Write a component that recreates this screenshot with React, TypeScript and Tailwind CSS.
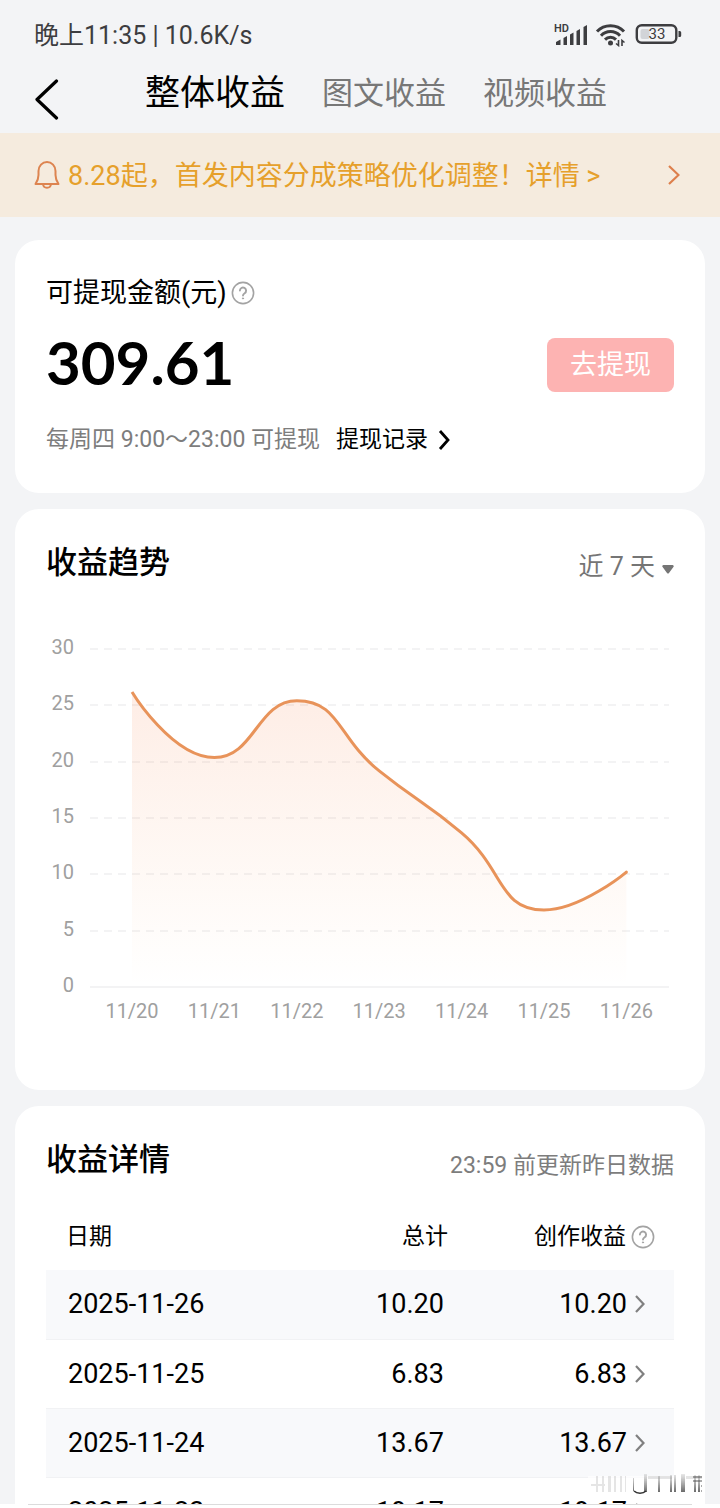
import { useId, useState } from "react";

type Tab = "all" | "article" | "video";

type Point = { x: number; y: number };

const tabs: { key: Tab; label: string }[] = [
    { key: "all", label: "整体收益" },
    { key: "article", label: "图文收益" },
    { key: "video", label: "视频收益" },
];

const trend = [
    { day: "11/20", value: 26.18 },
    { day: "11/21", value: 20.36 },
    { day: "11/22", value: 25.4 },
    { day: "11/23", value: 19.17 },
    { day: "11/24", value: 13.67 },
    { day: "11/25", value: 6.83 },
    { day: "11/26", value: 10.2 },
];

const rows = [
    { date: "2025-11-26", total: "10.20", creation: "10.20" },
    { date: "2025-11-25", total: "6.83", creation: "6.83" },
    { date: "2025-11-24", total: "13.67", creation: "13.67" },
    { date: "2025-11-23", total: "19.17", creation: "19.17" },
];

const clamp = (v: number, a: number, b: number) => Math.max(Math.min(v, Math.max(a, b)), Math.min(a, b));

// bezier line whose control points never leave the range of their neighbours
function smoothPath(points: Point[]) {
    let d = `M${points[0].x} ${points[0].y}`;
    let cp = points[0];
    for (let i = 1; i < points.length; i++) {
        const prev = points[i - 1];
        const p = points[i];
        const next = points[i + 1];
        let before = p;
        let after = p;
        if (next) {
            const lenPrev = Math.hypot(p.x - prev.x, p.y - prev.y);
            const lenNext = Math.hypot(next.x - p.x, next.y - p.y);
            const k = (0.5 * lenNext) / (lenNext + lenPrev);
            const nx = clamp(p.x + (next.x - prev.x) * k, p.x, next.x);
            const ny = clamp(p.y + (next.y - prev.y) * k, p.y, next.y);
            before = {
                x: clamp(p.x - ((nx - p.x) * lenPrev) / lenNext, prev.x, p.x),
                y: clamp(p.y - ((ny - p.y) * lenPrev) / lenNext, prev.y, p.y),
            };
            after = {
                x: p.x + ((p.x - before.x) * lenNext) / lenPrev,
                y: p.y + ((p.y - before.y) * lenNext) / lenPrev,
            };
        }
        d += `C${cp.x} ${cp.y} ${before.x} ${before.y} ${p.x} ${p.y}`;
        cp = after;
    }
    return d;
}

function StatusBar() {
    return (
        <div className="flex h-[66px] items-center justify-between pt-1 pr-[38px] pl-[34px] text-[#3d3d40]">
            <span className="pt-0.5 text-[25px] leading-8">晚上11:35 | 10.6K/s</span>
            <svg width="128" height="24" viewBox="554 23 128 24" fill="currentColor">
                <text x="554" y="32" fontSize="11" fontWeight="600">HD</text>
                <path d="M556 45v-3l4.500-2.500V45zM563.500 45v-7l3.500-2v9zM570 45V34.500l3.500-2V45zM576.500 45V31l3.500-2v16zM583.500 45V27l3.500-2v20z" />
                <g fill="none" stroke="currentColor" strokeWidth="3">
                    <path d="M597 31.500a18.500 18.500 0 0 1 27 0" />
                    <path d="M601 35.700a13 13 0 0 1 19 0" />
                    <path d="M605 39.600a7.800 7.800 0 0 1 11 0" />
                </g>
                <circle cx="610.500" cy="43" r="2.500" />
                <path d="M618.500 40v5.500l-2.500-2M622 46v-5.500l2.500 2" fill="none" stroke="currentColor" strokeWidth="1.600" />
                <rect x="636.800" y="25.200" width="39.500" height="17.600" rx="5" fill="none" stroke="currentColor" strokeWidth="2.400" />
                <rect x="640.500" y="29" width="9" height="10" rx="2" fill="#d2d4d8" />
                <path d="M678.500 31h1.200a1.500 1.500 0 0 1 1.500 1.500v3a1.500 1.500 0 0 1-1.500 1.500h-1.200z" />
                <text x="657" y="39" fontSize="15" textAnchor="middle">33</text>
            </svg>
        </div>
    );
}

function HelpIcon() {
    return (
        <svg width="24" height="24" viewBox="0 0 24 24" fill="none" stroke="#a3a3a3" strokeWidth="1.600" strokeLinecap="round">
            <circle cx="12" cy="12" r="10.600" />
            <path d="M8.900 9.600a3.100 3.100 0 1 1 4.800 2.600c-1.100.700-1.700 1.200-1.700 2.300" strokeWidth="1.900" />
            <circle cx="12" cy="17.400" r=".6" fill="#a3a3a3" strokeWidth="1" />
        </svg>
    );
}

function TrendChart() {
    const gradientId = useId();
    const yOf = (value: number) => 367 - value * 11.27;
    const points = trend.map((item, i) => ({ x: 85 + i * 82.4, y: yOf(item.value) }));
    const line = smoothPath(points);
    const last = points[points.length - 1];

    return (
        <svg className="mt-[35px] w-full" viewBox="-1 0 628 420" fontSize="20" fill="#a0a0a0">
            <defs>
                <linearGradient id={gradientId} gradientUnits="userSpaceOnUse" x1="0" y1="72" x2="0" y2="367">
                    <stop offset="0" stopColor="#f7672a" stopOpacity="0.120" />
                    <stop offset="1" stopColor="#f7862a" stopOpacity="0" />
                </linearGradient>
            </defs>
            {[30, 25, 20, 15, 10, 5, 0].map((tick) => (
                <g key={tick}>
                    <text x="27" y={yOf(tick) + 5} textAnchor="end">{tick}</text>
                    <line
                        x1="43"
                        x2="622"
                        y1={Math.round(yOf(tick))}
                        y2={Math.round(yOf(tick))}
                        stroke="#f3f3f4"
                        strokeWidth="2"
                        strokeDasharray={tick === 0 ? undefined : "8 6"}
                    />
                </g>
            ))}
            <path d={`${line}V367H${points[0].x}Z`} fill={`url(#${gradientId})`} />
            <path d={line} fill="none" stroke="#e8935a" strokeWidth="3" strokeLinejoin="round" />
            {trend.map((item, i) => (
                <text key={item.day} x={points[i].x} y="398" textAnchor="middle">{item.day}</text>
            ))}
            <circle cx={last.x} cy={last.y} r="1.500" fill="#e8935a" />
        </svg>
    );
}

function BalanceCard() {
    return (
        <section className="rounded-3xl bg-white px-[31px] pt-[33px] pb-[37px]">
            <div className="flex items-center gap-1 text-[27px] leading-10">
                <h2>可提现金额(元)</h2>
                <button type="button" aria-label="金额说明">
                    <HelpIcon />
                </button>
            </div>
            <div className="mt-[25px] flex h-[54px] items-center justify-between">
                <strong className="pb-1.5 font-[Lato,sans-serif] text-[60px] leading-[54px] font-bold">309.61</strong>
                <button type="button" className="h-full w-[127px] rounded-lg bg-[#fdb3b2] text-[27px] text-white">
                    去提现
                </button>
            </div>
            <div className="mt-8 flex items-center gap-4 text-[23px] leading-8">
                <span className="text-[#7d7d7d]">每周四 9:00～23:00 可提现</span>
                <a href="#records" className="flex items-center gap-2.5">
                    提现记录
                    <svg width="12" height="20" viewBox="0 0 12 20" fill="none" stroke="currentColor" strokeWidth="2.800">
                        <path d="M2 1l8 9-8 9" />
                    </svg>
                </a>
            </div>
        </section>
    );
}

function TrendCard() {
    return (
        <section className="rounded-3xl bg-white px-[31px] pt-8 pb-[50px]">
            <div className="flex items-center justify-between">
                <h2 className="text-[31px] leading-[44px] font-medium">收益趋势</h2>
                <div className="relative pt-2">
                    <select
                        aria-label="时间范围"
                        className="field-sizing-content appearance-none bg-transparent pr-[19px] text-[25px] leading-9 text-[#757575]"
                    >
                        <option>近 7 天</option>
                        <option>近 30 天</option>
                    </select>
                    <svg className="pointer-events-none absolute top-6 right-0" width="12" height="9" viewBox="0 0 12 9" fill="#757575">
                        <path d="M1.500 0h9a1.200 1.200 0 0 1 .9 2L7 8a1.400 1.400 0 0 1-2 0L.6 2a1.200 1.200 0 0 1 .9-2z" />
                    </svg>
                </div>
            </div>
            <TrendChart />
        </section>
    );
}

function DetailCard() {
    return (
        <section className="rounded-t-3xl bg-white px-[31px] pt-8">
            <div className="flex items-center justify-between">
                <h2 className="text-[31px] leading-[44px] font-medium">收益详情</h2>
                <span className="pt-3 text-[23px] leading-8 text-[#7d7d7d]">23:59 前更新昨日数据</span>
            </div>
            <table className="mt-[22px] w-full table-fixed">
                <thead>
                    <tr className="h-[66px] text-[23px] leading-8">
                        <th className="w-[32%] pl-5 text-left font-normal">日期</th>
                        <th className="w-[32%] text-right font-normal">总计</th>
                        <th className="pr-[19px] font-normal">
                            <div className="flex items-center justify-end gap-[5px]">
                                创作收益
                                <button type="button" aria-label="创作收益说明">
                                    <HelpIcon />
                                </button>
                            </div>
                        </th>
                    </tr>
                </thead>
                <tbody>
                    {rows.map((row) => (
                        <tr key={row.date} className="h-[69px] border-b border-[#f1f2f4] text-[27px] leading-9 odd:bg-[#f8f9fb]">
                            <td className="pl-[22px]">{row.date}</td>
                            <td className="pr-1 text-right">{row.total}</td>
                            <td className="pr-[29px]">
                                <a href={`#${row.date}`} className="flex items-center justify-end gap-2">
                                    {row.creation}
                                    <svg width="10" height="18" viewBox="0 0 10 18" fill="none" stroke="#808080" strokeWidth="2.200">
                                        <path d="M1 1l7.500 8L1 17" />
                                    </svg>
                                </a>
                            </td>
                        </tr>
                    ))}
                </tbody>
            </table>
        </section>
    );
}

// faded streaks floating in the bottom corner
function CornerMark() {
    const id = useId();
    return (
        <svg className="pointer-events-none absolute right-4 bottom-2.5" width="116" height="26" viewBox="0 0 116 26">
            <defs>
                <linearGradient id={id} x1="0" y1="0" x2="0" y2="1">
                    <stop offset="0" stopColor="#666" stopOpacity="0.150" />
                    <stop offset="1" stopColor="#444" stopOpacity="0.800" />
                </linearGradient>
                <filter id={`${id}-soft`}>
                    <feGaussianBlur stdDeviation="0.7 0.3" />
                </filter>
            </defs>
            <rect y="4" width="116" height="18" fill="#fff" opacity="0.700" />
            <g filter={`url(#${id}-soft)`}>
                <g fill="#999" opacity="0.250">
                    <path d="M3 12h14v2H3zM8 4h2v16H8zM14 4h2v16h-2zM20 4h3v16h-3zM26 4h2v16h-2zM32 4h2v16h-2zM37 4h1v16h-1z" />
                    <path d="M60 4h24v3H60zM98 4h16v3H98z" />
                </g>
                <g fill={`url(#${id})`}>
                    <path d="M45 6h1v13h-1zM56 2h3v18h-3zM70 4h2v16h-2zM82 3h2v17h-2zM86 3h2v17h-2zM93 2h4v18h-4zM106 3h2v17h-2zM110 3h2v17h-2z" />
                </g>
            </g>
            <path d="M46 19c3 3 9 3 12 0" fill="none" stroke="#333" strokeWidth="1.600" />
            <path d="M105 5h9M105 9h9M113 14h1M113 19h1" stroke="#444" strokeWidth="1.300" opacity="0.600" />
        </svg>
    );
}

export default function App() {
    const [tab, setTab] = useState<Tab>("all");

    return (
        <div className="relative flex h-screen flex-col overflow-hidden bg-[#f3f4f6] font-[Roboto,'Noto_Sans_CJK_SC',sans-serif] text-black">
            <div className="min-h-0 flex-1 overflow-hidden">
                <StatusBar />
                <nav className="flex h-[67px] items-center pl-[34px]">
                    <button type="button" aria-label="返回" className="mr-[86px]">
                        <svg width="25" height="42" viewBox="0 0 25 42" fill="none" stroke="currentColor" strokeWidth="3.200" strokeLinecap="round" strokeLinejoin="round">
                            <path d="M22.500 2L3 20.500l19.500 18.500" />
                        </svg>
                    </button>
                    <div className="flex items-center gap-[37px] pb-3">
                        {tabs.map(({ key, label }) => (
                            <button
                                key={key}
                                type="button"
                                onClick={() => setTab(key)}
                                className={tab === key ? "text-[35px] leading-[44px]" : "text-[31px] leading-[44px] text-[#777777]"}
                            >
                                {label}
                            </button>
                        ))}
                    </div>
                </nav>
                <a href="#notice" className="flex h-[84px] items-center bg-[#f5ebde] pr-10 pl-[34px] text-[27px] leading-9 text-[#e6a02b]">
                    <svg className="mr-2" width="26" height="30" viewBox="0 0 26 30" fill="none" stroke="#dd8450" strokeWidth="2" strokeLinejoin="round">
                        <path d="M4.500 15v-4a8.500 9 0 0 1 17 0v4c0 4 1 6 3 9H1.500c2-3 3-5 3-9z" />
                        <path d="M9 24c.5 5 7.500 5 8 0" />
                    </svg>
                    <span className="flex-1 pt-0.5">8.28起，首发内容分成策略优化调整！详情 &gt;</span>
                    <svg width="12" height="20" viewBox="0 0 12 20" fill="none" stroke="#dd7f4c" strokeWidth="2.200">
                        <path d="M1 1l9.500 9L1 19" />
                    </svg>
                </a>
                <main className="mx-[15px] mt-[23px] flex flex-col gap-4">
                    <BalanceCard />
                    <TrendCard />
                    <DetailCard />
                </main>
            </div>
            <div className="h-1 shrink-0 bg-white px-7">
                <div className="h-px bg-[#dcdcdc]" />
            </div>
            <CornerMark />
        </div>
    );
}
